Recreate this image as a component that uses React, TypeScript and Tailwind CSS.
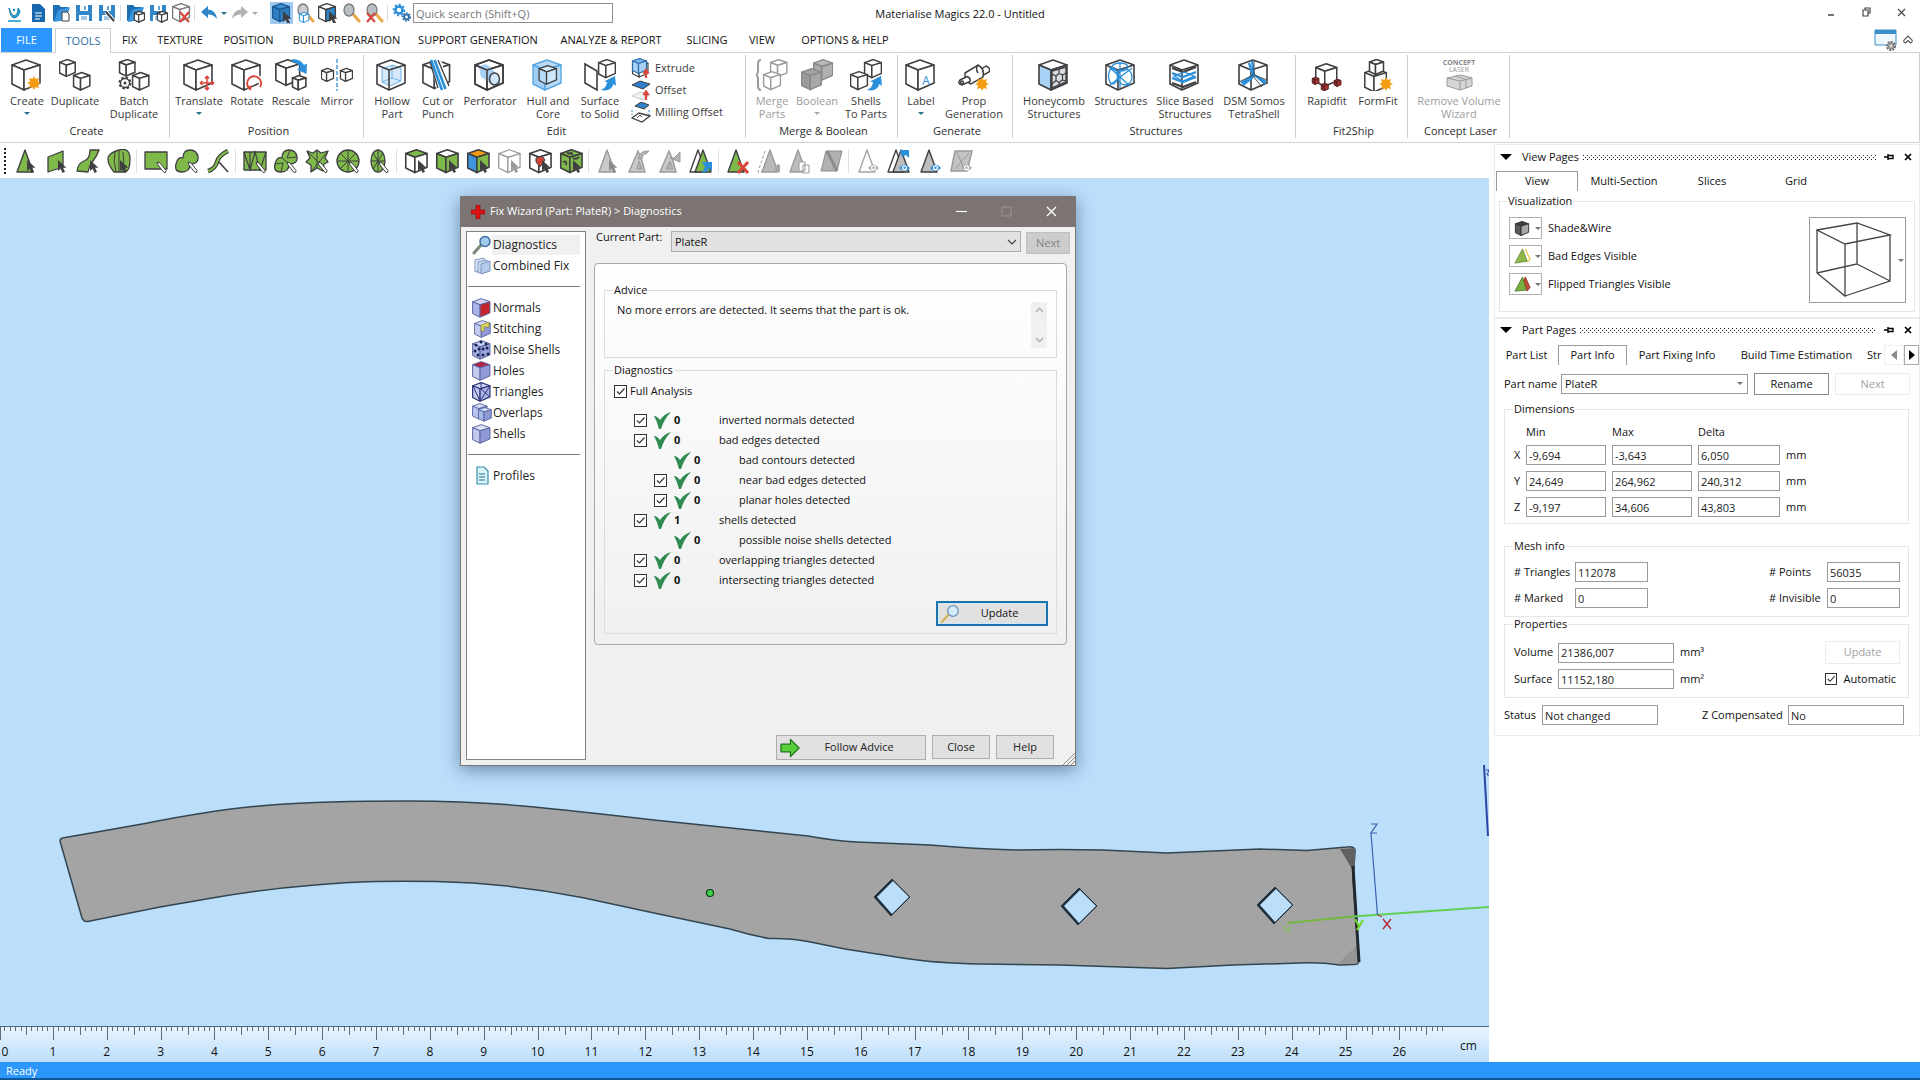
import React from "react";

const INK = "#3f3f41";
const BLUE = "#2b8fd9";
const GREEN = "#76b043";
const GREY = "#9a9a9a";

/* ---------- shared drawing pieces ---------- */

type CubeProps = { x?: number; y?: number; s?: number; top?: string; left?: string; right?: string; stroke?: string; w?: number };
function Cube({ x = 0, y = 0, s = 1, top = "#fff", left = "#fff", right = "#fff", stroke = INK, w = 1.6 }: CubeProps) {
  return (
    <g transform={`translate(${x} ${y}) scale(${s})`} stroke={stroke} strokeWidth={w / s} strokeLinejoin="round">
      <path d="M15 1 29 6 13 11 1 6Z" fill={top} />
      <path d="M1 6 13 11V31L1 25Z" fill={left} />
      <path d="M13 11 29 6V24L13 31Z" fill={right} />
    </g>
  );
}

function WireCube({ stroke = INK }: { stroke?: string }) {
  return (
    <g fill="none" stroke={stroke} strokeWidth="1.6" strokeLinejoin="round">
      <path d="M15 1 29 6V24L13 31 1 25V6Z" />
      <path d="M1 6 13 11 29 6M13 11V31" />
    </g>
  );
}

function Cursor({ x, y, fill = INK }: { x: number; y: number; fill?: string }) {
  return <path transform={`translate(${x} ${y})`} d="M0 0V11L2.6 8.8 4.6 13 7 11.8 5 7.8H8.4Z" fill={fill} />;
}

function Pencil({ x, y }: { x: number; y: number }) {
  return <path transform={`translate(${x} ${y})`} d="M0 0 3 1 9 8.5Q9.500 11 7 10.500L1 3Z" fill="#fff" stroke={INK} strokeWidth="1" />;
}

function Star({ x, y }: { x: number; y: number }) {
  return (
    <path
      transform={`translate(${x} ${y})`}
      d="M0-7 1.600-3.900 5-5 3.900-1.600 7 0 3.900 1.600 5 5 1.600 3.900 0 7-1.600 3.900-5 5-3.900 1.600-7 0-3.900-1.600-5-5-1.600-3.900Z"
      fill="#f39c12"
    />
  );
}

function BlueSwoop({ x, y }: { x: number; y: number }) {
  return <path transform={`translate(${x} ${y})`} d="M0 14Q6 11 6 6L3 5.500 14 0 15 10 12.500 8Q10 16 0 14Z" fill={BLUE} />;
}

function Eye({ x, y, c = BLUE }: { x: number; y: number; c?: string }) {
  return (
    <g transform={`translate(${x} ${y})`}>
      <path d="M0 4Q5.500-3 11 4Q5.500 10 0 4Z" fill={c} />
      <circle cx="5.500" cy="3.800" r="2.600" fill="#fff" />
      <circle cx="5.500" cy="3.800" r="1.300" fill={c} />
    </g>
  );
}

function Big({ children }: { children: React.ReactNode }) {
  return (
    <svg viewBox="0 0 32 32" className="h-8 w-8 shrink-0" aria-hidden="true">
      {children}
    </svg>
  );
}

/* ---------- ribbon ---------- */

const big: Record<string, React.ReactNode> = {
  create: (<Big><Cube /><Star x={23} y={24} /></Big>),
  duplicate: (<Big><Cube s={0.56} w={1.5} /><Cube x={14} y={13} s={0.58} w={1.5} /></Big>),
  batch: (
    <Big>
      <Cube s={0.55} x={1} w={1.5} /><Cube x={14} y={13} s={0.58} w={1.5} />
      <circle cx="7" cy="24" r="5.500" fill="#fff" stroke={INK} strokeWidth="2" strokeDasharray="2.400 1.900" />
      <circle cx="7" cy="24" r="4.500" fill="#fff" stroke={INK} strokeWidth="1.300" /><circle cx="7" cy="24" r="1.500" fill={INK} />
    </Big>
  ),
  translate: (
    <Big><Cube /><path d="M24 17V31M17 24H31M24 17l-2 2.500M24 17l2 2.500M24 31l-2-2.500M24 31l2-2.500M17 24l2.500-2M17 24l2.500 2M31 24l-2.500-2M31 24l-2.500 2" stroke="#d9463b" strokeWidth="1.500" fill="none" /></Big>
  ),
  rotate: (
    <Big><Cube /><path d="M29 28A6.500 6.500 0 1 0 18.500 28" stroke="#fff" strokeWidth="5" fill="none" /><path d="M29 28A7 7 0 1 0 18 29" stroke="#d9463b" strokeWidth="1.900" fill="none" /><path d="M15.500 27.500 21 26.500 19.500 32Z" fill="#d9463b" /></Big>
  ),
  rescale: (
    <Big><Cube s={0.85} /><path d="M17 0Q26 0 29 6L32 4.500 31.500 15 22 10.500 25.500 8.500Q22 3 17 3Z" fill={BLUE} /><Cube x={17} y={16} s={0.48} w={1.600} /></Big>
  ),
  mirror: (
    <Big><path d="M16 0V32" stroke={BLUE} strokeWidth="1.300" strokeDasharray="4 2" /><Cube y={9} s={0.43} w={1.300} /><Cube x={19} y={9} s={0.43} w={1.300} /></Big>
  ),
  hollow: (
    <Big><path d="M6 10 16 6 25 9V22L14 27 6 23Z" fill="#d6eafb" stroke="#6fb2e6" /><path d="M16 6V19L6 23M16 19 25 22" stroke="#6fb2e6" fill="none" /><WireCube /></Big>
  ),
  cut: (
    <Big><Cube s={0.95} /><path d="M8 0H19L27 32H15Z" fill="#fff" /><path d="M9 1 20 31M12.500 1 23.500 30" stroke={BLUE} strokeWidth="2.600" /><path d="M16 1 27 27" stroke={INK} strokeWidth="1.300" /><path d="M8 3 16 29" stroke={INK} strokeWidth="1.300" /></Big>
  ),
  perforator: (
    <Big><Cube /><path d="M5 9Q11 2 16 8L25 17Q25 25 18 25L7 18Z" fill="#a9d2f4" /><ellipse cx="20.500" cy="20" rx="5" ry="6" fill="#cfe6fa" stroke={INK} strokeWidth="1.500" /><WireCube /></Big>
  ),
  hull: (
    <Big><Cube top="#b7dbf8" left="#9fcef5" right="#b7dbf8" stroke="#58a6e2" w={1.400} /><Cube x={6.500} y={6} s={0.62} top="#d9edfc" left="#b7dbf8" right="#cce6fb" stroke={INK} w={1.300} /></Big>
  ),
  surface: (
    <Big><path d="M1 5 13 12V31L1 24Z" fill="#fff" stroke={INK} strokeWidth="1.600" /><Cube x={14} y={0} s={0.6} w={1.500} /><BlueSwoop x={17} y={17} /></Big>
  ),
  merge: (
    <Big><path d="M5 1Q2 1 2 5V12Q2 15 0 16Q2 17 2 20V27Q2 31 5 31" fill="none" stroke={GREY} strokeWidth="2" /><Cube x={14} y={0} s={0.58} stroke={GREY} w={1.400} /><Cube x={7} y={12} s={0.6} stroke={GREY} w={1.400} /></Big>
  ),
  boolean: (
    <Big><Cube x={12} y={0} s={0.68} top="#b9b9b9" left="#a9a9a9" right="#b1b1b1" stroke="#888" w={1.400} /><Cube y={9} s={0.7} top="#a2a2a2" left="#9a9a9a" right="#a8a8a8" stroke="#888" w={1.400} /></Big>
  ),
  shells: (<Big><Cube x={14} y={0} s={0.6} w={1.500} /><Cube y={12} s={0.6} w={1.500} /><BlueSwoop x={17} y={17} /></Big>),
  label: (
    <Big><Cube /><text x="21" y="26" fontSize="12" fontFamily="Open Sans, sans-serif" textAnchor="middle" fill={BLUE}>A</text></Big>
  ),
  prop: (
    <Big>
      <g stroke={INK} strokeWidth="1.500" fill="#fff"><path d="M22 11 28 7Q33 9 31 13L24 17Z" /><path d="M7 14 20 6Q27 10 25 18L13 25Q6 22 7 14Z" /><path d="M2 21 9 17.500Q13 19 12 22.500L4 26Q-1 25 2 21Z" /><path d="M20 6Q17 9 20 14" fill="none" /><circle cx="4" cy="23.500" r="1.400" /></g>
      <Star x={24} y={25} />
    </Big>
  ),
  honeycomb: (
    <Big><Cube top="#fff" left="#a7d2f5" right="#8fc4f0" /><path d="M14 12 28 8V23L14 29Z" fill="#d9dde0" stroke={INK} strokeWidth="1.400" /><path d="M18 17 21 14.500 24.500 16V21L21 23.500 18 21.500ZM21 10V14.500M14 15 18 17M24.500 16 28 14M24.500 21 28 22M21 23.500V26M18 21.500 14 25" fill="none" stroke={INK} strokeWidth="1.200" /></Big>
  ),
  structures: (
    <Big><WireCube /><g fill="none" stroke={BLUE} strokeWidth="1.300"><ellipse cx="8" cy="17" rx="4.500" ry="8" /><ellipse cx="20" cy="18" rx="7" ry="8" /><ellipse cx="15" cy="8" rx="8" ry="4" /><path d="M4 8 25 27M27 9 5 26M15 3V29" /></g></Big>
  ),
  slice: (
    <Big><WireCube />{[9, 14, 19, 24].map((y) => (<path key={y} d={`M3 ${y} 14 ${y + 4} 27 ${y - 1}`} fill="none" stroke={y === 14 || y === 19 ? BLUE : INK} strokeWidth="2.200" />))}<path d="M5 17 15 13 25 17 14 22Z" fill="none" stroke={BLUE} strokeWidth="1.300" /></Big>
  ),
  dsm: (
    <Big><WireCube /><path d="M14 2 16 16 28 23M16 16 3 24M11 4 15 17M18 17 27 25M15 18 5 26" fill="none" stroke={BLUE} strokeWidth="2.300" /><path d="M16 1V16L29 21M15 16 1 23M15 17 24 28" fill="none" stroke={INK} strokeWidth="0.900" /></Big>
  ),
  rapidfit: (
    <Big><Cube x={4} y={4} s={0.75} w={1.500} /><Cube x={1} y={18} s={0.24} top="#a33" left="#832a2a" right="#a33" stroke="#5a2020" w={1} /><Cube x={10} y={24} s={0.25} top="#a33" left="#832a2a" right="#a33" stroke="#5a2020" w={1} /><Cube x={23} y={20} s={0.24} top="#a33" left="#832a2a" right="#a33" stroke="#5a2020" w={1} /></Big>
  ),
  formfit: (<Big><Cube x={2} y={9} s={0.77} w={1.500} /><Cube x={7} y={0} s={0.5} w={1.500} /><Star x={24} y={25} /></Big>),
  concept: (
    <Big>
      <text x="16" y="6" textAnchor="middle" fontSize="7" fontWeight="700" fontFamily="Open Sans, sans-serif" fill="#888">CONCEPT</text>
      <text x="16" y="13" textAnchor="middle" fontSize="7" fontFamily="Open Sans, sans-serif" fill="#999">LASER</text>
      <path d="M4 19 18 16 29 19V27L17 31 4 27Z" fill="#d6d6d6" stroke="#999" /><path d="M4 19 17 22 29 19M17 22V31M12 17 23 20.500V29" fill="none" stroke="#999" />
    </Big>
  ),
};

type Item = { icon: string; lines: string[]; w: string; caret?: boolean; off?: boolean };
const groups: { name: string; w: string; pad: string; items: Item[]; extra?: boolean }[] = [
  { name: "Create", w: "w-[170px]", pad: "pl-[3px]", items: [
    { icon: "create", lines: ["Create"], w: "w-12", caret: true },
    { icon: "duplicate", lines: ["Duplicate"], w: "w-12" },
    { icon: "batch", lines: ["Batch", "Duplicate"], w: "w-[70px]" },
  ] },
  { name: "Position", w: "w-[194px]", pad: "pl-[2px]", items: [
    { icon: "translate", lines: ["Translate"], w: "w-[54px]", caret: true },
    { icon: "rotate", lines: ["Rotate"], w: "w-[42px]" },
    { icon: "rescale", lines: ["Rescale"], w: "w-[46px]" },
    { icon: "mirror", lines: ["Mirror"], w: "w-[46px]" },
  ] },
  { name: "Edit", w: "w-[382px]", pad: "pl-[5px]", extra: true, items: [
    { icon: "hollow", lines: ["Hollow", "Part"], w: "w-[46px]" },
    { icon: "cut", lines: ["Cut or", "Punch"], w: "w-[46px]" },
    { icon: "perforator", lines: ["Perforator"], w: "w-[58px]" },
    { icon: "hull", lines: ["Hull and", "Core"], w: "w-[58px]" },
    { icon: "surface", lines: ["Surface", "to Solid"], w: "w-[46px]" },
  ] },
  { name: "Merge & Boolean", w: "w-[152px]", pad: "pl-[4px]", items: [
    { icon: "merge", lines: ["Merge", "Parts"], w: "w-[44px]", off: true },
    { icon: "boolean", lines: ["Boolean"], w: "w-[46px]", caret: true, off: true },
    { icon: "shells", lines: ["Shells", "To Parts"], w: "w-[52px]" },
  ] },
  { name: "Generate", w: "w-[115px]", pad: "pl-[4px]", items: [
    { icon: "label", lines: ["Label"], w: "w-[38px]", caret: true },
    { icon: "prop", lines: ["Prop", "Generation"], w: "w-[68px]" },
  ] },
  { name: "Structures", w: "w-[283px]", pad: "pl-[4px]", items: [
    { icon: "honeycomb", lines: ["Honeycomb", "Structures"], w: "w-[74px]" },
    { icon: "structures", lines: ["Structures"], w: "w-[60px]" },
    { icon: "slice", lines: ["Slice Based", "Structures"], w: "w-[68px]" },
    { icon: "dsm", lines: ["DSM Somos", "TetraShell"], w: "w-[70px]" },
  ] },
  { name: "Fit2Ship", w: "w-[112px]", pad: "pl-[5px]", items: [
    { icon: "rapidfit", lines: ["Rapidfit"], w: "w-[52px]" },
    { icon: "formfit", lines: ["FormFit"], w: "w-[50px]" },
  ] },
  { name: "Concept Laser", w: "w-[102px]", pad: "pl-[2px]", items: [
    { icon: "concept", lines: ["Remove Volume", "Wizard"], w: "w-[98px]", off: true },
  ] },
];

const editExtras: { label: string; icon: React.ReactNode }[] = [
  { label: "Extrude", icon: (<><Cube x={1} y={2} s={0.55} w={1.200} /><Cube x={1} y={0} s={0.5} w={1.200} top="#7db9ec" left="#a7d2f5" right="#a7d2f5" stroke="#2a6ca8" /><path d="M15 20V13M12.500 15.500 15 12 17.500 15.500" fill="none" stroke="#d9463b" strokeWidth="2.200" /></>) },
  { label: "Offset", icon: (<><path d="M1 5 9 1 19 4 12 9Z" fill="#2f7fcb" stroke={INK} /><path d="M1 16 9 12 19 15 12 20Z" fill="#f1f1f1" stroke="#c9c9c9" /><path d="M15 20V12M12.500 15 15 11.500 17.500 15" fill="none" stroke="#d9463b" strokeWidth="2.200" /></>) },
  { label: "Milling Offset", icon: (<><path d="M4 4 10 0 18 3 13 7Z" fill="#2f7fcb" stroke={INK} /><path d="M1 8V14M18 8V13" stroke={BLUE} strokeDasharray="2 1.500" /><path d="M1 16 8 11 19 14 11 20Z" fill="#fff" stroke={INK} strokeWidth="1.300" /><path d="M6 16 9 13 11 15" fill="none" stroke={INK} /></>) },
];

function Caret({ off = false }: { off?: boolean }) {
  return <span className={off ? "mt-[5px] border-x-[3px] border-t-[3px] border-x-transparent border-t-[#aaa]" : "mt-[5px] border-x-[3px] border-t-[3px] border-x-transparent border-t-[#2c6f8f]"} />;
}

function Ribbon() {
  return (
    <div className="flex h-[91px] shrink-0 border-y border-r border-[#cfcfcf] bg-white pt-[2px] pb-1">
      {groups.map((g) => (
        <section key={g.name} className={`${g.w} flex shrink-0 flex-col justify-between border-r border-[#cfcfcf]`}>
          <div className={`${g.pad} flex justify-start`}>
            {g.items.map((it) => (
              <button key={it.icon} className={`${it.w} ${it.off ? "text-[#9c9c9c]" : "text-[#3a3a3a]"} flex shrink-0 flex-col items-center pt-1 text-[11px] leading-[13px] whitespace-nowrap`}>
                <span className="mb-[3px]">{big[it.icon]}</span>
                {it.lines.map((l) => (<span key={l}>{l}</span>))}
                {it.caret && <Caret off={it.off} />}
              </button>
            ))}
            {g.extra && (
              <div className="flex flex-col pt-[2px] pl-2">
                {editExtras.map((e) => (
                  <button key={e.label} className="flex h-[22px] items-center gap-1 text-[11px] whitespace-nowrap text-[#3a3a3a]">
                    <svg viewBox="0 0 20 21" className="h-[21px] w-5">{e.icon}</svg>
                    {e.label}
                  </button>
                ))}
              </div>
            )}
          </div>
          <h2 className="pl-1 text-center text-[11px] leading-[15px] text-[#2d2d2d]">{g.name}</h2>
        </section>
      ))}
    </div>
  );
}

/* ---------- title bar ---------- */

const folder = (<><path d="M2 2H8L10 4H17V8H8L5 18H2Z" fill="#1f6fb4" /><path d="M7 7 19 4 15 17 3 19Z" fill="#3a95dc" /></>);
const floppy = (<><path d="M2 2H18V18H2Z" fill="#2f86c9" /><path d="M6 2H14V8H6ZM5 12H15V18H5Z" fill="#fff" /><path d="M7 14H13M7 16H13" stroke="#2f86c9" strokeWidth="0.900" /><path d="M11 3V7" stroke="#2f86c9" strokeWidth="1.500" /></>);
const cubeSmall = (<Cube x={9} y={8} s={0.36} w={1.200} />);
const glass = (c: string) => (<><path d="M12 11 18 18" stroke="#eba94a" strokeWidth="3" strokeLinecap="round" /><ellipse cx="8" cy="7" rx="5" ry="6" fill={c} stroke="#7a7a7a" strokeWidth="1.300" /></>);

const qat: Record<string, React.ReactNode> = {
  logo: (<><path d="M4 5Q6 12 9 13Q13 12 13 5L15 8Q14 14 9 15Q5 14 4 5Z" fill="#1fa0c8" stroke="#1b7fae" /><path d="M3 18H16" stroke="#4ab0d8" strokeWidth="2" /><circle cx="9" cy="7" r="1.200" fill="#1d7fc0" /></>),
  doc: (<><path d="M4 1H12L17 6V19H4Z" fill="#1968ad" /><path d="M7 10H14M7 13H14M7 16H12" stroke="#fff" /></>),
  open: (<>{folder}<path d="M11 9H16L18 11V18H11Z" fill="#fff" stroke={INK} /></>),
  save: floppy,
  saveAs: (<>{floppy}<path d="M9 9 17 18" stroke="#fff" strokeWidth="4" /><path d="M9 9 17 18" stroke={INK} strokeWidth="2" /></>),
  importPart: (<>{folder}{cubeSmall}</>),
  savePart: (<>{floppy}{cubeSmall}</>),
  removePart: (<><Cube s={0.6} x={1} w={1.300} stroke="#777" /><path d="M9 9 18 19M18 9 9 19" stroke="#d9463b" strokeWidth="2.200" /></>),
  undo: (<path d="M2 9 9 3V6.500Q17 7 18 16Q14 11 9 11.500V15Z" fill="#2f86c9" />),
  redo: (<path d="M18 9 11 3V6.500Q3 7 2 16Q6 11 11 11.500V15Z" fill="#b2b2b2" />),
  pick: (<><Cube s={0.6} top="#3f8fd0" left="#2f7fc4" right="#2f7fc4" stroke="#1b568c" w={1.200} /><Cursor x={11} y={8} /></>),
  zoomPart: (<>{glass("#c9ccd0")}<Cube x={4} y={9} s={0.34} w={1} stroke={BLUE} /></>),
  selectFace: (<><Cube s={0.6} right="#2f86c9" w={1.300} /><Cursor x={11} y={8} /></>),
  zoom: glass("#b9c0c6"),
  zoomOff: (<>{glass("#b9c0c6")}<path d="M3 10 11 19M11 10 3 19" stroke="#d9463b" strokeWidth="2.200" /></>),
  gears: (<><circle cx="7" cy="7" r="3.500" fill="none" stroke={BLUE} strokeWidth="2.500" /><circle cx="7" cy="7" r="5.300" fill="none" stroke={BLUE} strokeWidth="2" strokeDasharray="2 2" /><circle cx="14.500" cy="14" r="2.400" fill="none" stroke="#2f6fa8" strokeWidth="2" /><circle cx="14.500" cy="14" r="4" fill="none" stroke="#2f6fa8" strokeWidth="1.400" strokeDasharray="1.500 1.500" /></>),
};

function Qat({ name, active = false }: { name: string; active?: boolean }) {
  return (
    <button aria-label={name} className={`${active ? "bg-[#9ccaf0]" : ""} flex h-[22px] w-[23px] items-center justify-center`}>
      <svg viewBox="0 0 20 20" className="h-5 w-5">{qat[name]}</svg>
    </button>
  );
}

function TitleBar() {
  const sep = <span className="mx-[2px] h-4 w-px bg-[#dcdcdc]" />;
  return (
    <header className="grid h-7 shrink-0 grid-cols-[1fr_auto_1fr] items-start bg-white">
      <div className="flex items-center pt-[2px] pl-[3px]">
        <Qat name="logo" /><Qat name="doc" /><Qat name="open" /><Qat name="save" /><Qat name="saveAs" />
        {sep}
        <Qat name="importPart" /><Qat name="savePart" /><Qat name="removePart" />
        {sep}
        <Qat name="undo" />
        <span className="mx-px border-x-[3px] border-t-[3px] border-x-transparent border-t-[#2c6f8f]" />
        <Qat name="redo" />
        <span className="mr-3 ml-px border-x-[3px] border-t-[3px] border-x-transparent border-t-[#aaa]" />
        <Qat name="pick" active /><Qat name="zoomPart" /><Qat name="selectFace" /><Qat name="zoom" /><Qat name="zoomOff" />
        {sep}
        <Qat name="gears" />
        <input aria-label="Quick search" placeholder="Quick search (Shift+Q)" className="h-5 w-[200px] border border-[#8f8f8f] px-[2px] text-[11px] text-[#555] placeholder:text-[#777]" />
      </div>
      <h1 className="pt-[6px] text-[11px] leading-4 text-[#111]">Materialise Magics 22.0 - Untitled</h1>
      <div className="flex justify-end gap-[21px] pt-[5px] pr-3">
        <button aria-label="Minimize"><svg viewBox="0 0 14 14" className="h-[14px] w-[14px]"><path d="M4 10H10" stroke="#444" strokeWidth="1.500" /></svg></button>
        <button aria-label="Restore"><svg viewBox="0 0 14 14" className="h-[14px] w-[14px]"><path d="M4 5H9V11H4ZM6 5V3H11V8H9" fill="none" stroke="#444" strokeWidth="1.200" /></svg></button>
        <button aria-label="Close"><svg viewBox="0 0 14 14" className="h-[14px] w-[14px]"><path d="M4 4 11 11M11 4 4 11" stroke="#444" strokeWidth="1.200" /></svg></button>
      </div>
    </header>
  );
}

const tabs: [string, string][] = [
  ["FIX", "w-[37px]"], ["TEXTURE", "w-[64px]"], ["POSITION", "w-[73px]"], ["BUILD PREPARATION", "w-[123px]"], ["SUPPORT GENERATION", "w-[140px]"],
  ["ANALYZE & REPORT", "w-[126px]"], ["SLICING", "w-[66px]"], ["VIEW", "w-[44px]"], ["OPTIONS & HELP", "w-[122px]"],
];

function TabBar() {
  return (
    <nav className="flex h-6 shrink-0 items-end bg-white pl-px text-[11px] whitespace-nowrap text-[#111]">
      <button className="h-6 w-[51px] bg-[#2b96ff] text-white">FILE</button>
      <button className="z-10 -mb-px ml-[3px] h-[25px] w-[56px] border border-b-0 border-[#cfcfcf] bg-white text-[#2a6f9f]">TOOLS</button>
      {tabs.map(([t, w]) => (<button key={t} className={`${w} h-6 shrink-0`}>{t}</button>))}
      <div className="flex h-6 flex-1 items-center justify-end gap-1 pr-[6px]">
        <svg viewBox="0 0 24 22" className="h-[22px] w-6"><path d="M1 1H22V16H1Z" fill="#eef7fd" stroke="#3c8fc9" /><path d="M1 1H22V5H1Z" fill="#3c8fc9" /><circle cx="17" cy="17" r="4" fill="#fff" stroke="#666" strokeWidth="2" strokeDasharray="2 1" /><circle cx="17" cy="17" r="2.500" fill="#ccc" stroke="#666" /></svg>
        <svg viewBox="0 0 12 10" className="h-[10px] w-3"><path d="M6 1 10 5Q11 7 8.500 8L6 5.500 3.500 8Q1 7 2 5Z" fill="#fff" stroke="#555" strokeWidth="1.100" /></svg>
      </div>
    </nav>
  );
}

/* ---------- selection tool bar ---------- */

const tri = (fill: string, stroke: string, x = 0) => (<path d={`M${x + 10} 1 ${x + 18} 23 ${x + 2} 23Z`} fill={fill} stroke={stroke} strokeWidth="1.400" strokeLinejoin="round" />);
const G = { fill: "#7fb94a", stroke: INK, strokeWidth: 1.300, strokeLinejoin: "round" as const };

const tools: React.ReactNode[][] = [
  [
    <>{tri(G.fill, INK, 1)}<Cursor x={13} y={11} /></>,
    <><path d="M3 8 18 2V18L3 23Z" {...G} /><Cursor x={13} y={11} /></>,
    <><path d="M14 1H23Q21 7 17 12T12 23L1 22Q2 14 8 12T14 1Z" {...G} /><Cursor x={14} y={11} /></>,
    <><path d="M7 23Q1 16 1 10T12 1 23 10 18 23Z" {...G} /><path d="M8 3Q6 12 9 23M16 3Q18 12 15 23M12 1V23" fill="none" stroke={INK} /><Cursor x={13} y={11} /></>,
  ],
  [
    <><path d="M1 3H23V20H1Z" {...G} /><Pencil x={13} y={13} /></>,
    <><path d="M8 9Q8 1 15 1T23 8 15 15Q15 23 7 23T1 15 8 9Z" {...G} /><Pencil x={13} y={13} /></>,
    <><path d="M2 22Q9 20 11 13T22 2" fill="none" stroke={INK} strokeWidth="4.500" /><path d="M2 22Q9 20 11 13T22 2" fill="none" stroke={G.fill} strokeWidth="2.200" /><path d="M13 13 22 23" stroke={INK} strokeWidth="1.600" /></>,
  ],
  [
    <><path d="M1 3H23V21H1Z" {...G} /><path d="M1 3 7 21 12 3 17 21 23 3M7 3V21" fill="none" stroke={INK} strokeWidth="1.200" /><Pencil x={13} y={13} /></>,
    <><path d="M8 9Q8 1 15 1T23 8 15 15Q15 23 7 23T1 15 8 9Z" {...G} /><path d="M8 9 15 15M16 1 13 9 23 8M1 15 9 14 7 23" fill="none" stroke={INK} /><Pencil x={13} y={13} /></>,
    <><path d="M2 2 8 4 12 1 16 4 23 2 20 9 23 13 19 15 18 22 12 19 6 23 6 16 1 13 5 9Z" {...G} /><path d="M2 2 22 22M23 2 6 23M12 1V19" fill="none" stroke={INK} /><Pencil x={13} y={13} /></>,
    <><circle cx="12" cy="12" r="11" {...G} /><path d="M12 1V23M1 12H23M4 4 20 20M20 4 4 20" stroke={INK} /><Pencil x={13} y={13} /></>,
    <><ellipse cx="11" cy="12" rx="7" ry="11" {...G} /><path d="M11 1V23M4 12H18M6 4 16 20M16 4 6 20" stroke={INK} /><Pencil x={12} y={13} /></>,
  ],
  [
    <><Cube x={1} s={0.76} top={G.fill} /><Cursor x={14} y={11} /></>,
    <><Cube x={1} s={0.76} left={G.fill} right={G.fill} /><Cursor x={14} y={11} /></>,
    <><Cube x={1} s={0.76} top="#f39c12" left="#3d97dd" right={G.fill} /><Cursor x={14} y={11} /></>,
    <><Cube x={1} s={0.76} stroke={GREY} w={1.300} /><Cursor x={14} y={11} fill={GREY} /></>,
    <><Cube x={1} s={0.76} /><path d="M8 9 14 7 17 11 12 18 8 13Z" fill="#cf4436" stroke={INK} /><Cursor x={14} y={11} /></>,
    <><Cube x={1} s={0.76} top={G.fill} left={G.fill} right={G.fill} /><path d="M8 4 13 5 12 3M4 13Q8 11 7 16M14 9Q17 11 20 8" fill="none" stroke={INK} strokeWidth="1.800" /><Cursor x={14} y={11} /></>,
  ],
  [
    <>{tri("#c9c9c9", "#9a9a9a", 1)}<Cursor x={13} y={11} fill="#8a8a8a" /></>,
    <><path d="M11 2 2 23H18L15 12Z" fill="#c9c9c9" stroke="#9a9a9a" strokeWidth="1.400" /><path d="M10 20H15L12 12ZM11 10Q13 1 22 2L19 5Q16 4 15 10Z" fill="#b3b3b3" stroke="#9a9a9a" /></>,
    <><path d="M11 2 2 23H18L15 12Z" fill="#c9c9c9" stroke="#9a9a9a" strokeWidth="1.400" /><path d="M8 20H15L12 12ZM12 9H16L22 3V13Z" fill="#b3b3b3" stroke="#9a9a9a" /></>,
    <>{tri("#fff", INK, -1)}{tri(G.fill, INK, 4)}<path d="M13 13H23V22L20 19Q18 24 13 24L16 18Z" fill={BLUE} /></>,
  ],
  [
    <>{tri(G.fill, INK)}<path d="M12 13 22 24M22 13 12 24" stroke="#d9463b" strokeWidth="3" /></>,
    <><path d="M8 2 1 23H8" fill="none" stroke="#999" strokeDasharray="3 2" />{tri("#b9b9b9", "#9a9a9a", 3)}<path d="M14 23Q20 21 20 15L23 16V23Z" fill="#a5a5a5" /></>,
    <>{tri("#bdbdbd", "#9a9a9a")}<path d="M11 13H17V22H11ZM15 16H21V24H15Z" fill="#fff" stroke="#999" /></>,
    <><path d="M7 2H23L18 22H2Z" fill="#b1b1b1" stroke="#8d8d8d" /><path d="M8 2 18 22" stroke="#8d8d8d" strokeWidth="3" /></>,
  ],
  [
    <>{tri("#fff", "#a5a5a5", 1)}<Eye x={12} y={15} c="#aaa" /></>,
    <>{tri("#fff", INK, -1)}{tri("#bdbdbd", INK, 4)}<path d="M13 1H22V9L19 6 15 8Z" fill={BLUE} /><Eye x={12} y={15} /></>,
    <>{tri("#bdbdbd", INK, 1)}<Eye x={12} y={15} /></>,
    <><path d="M6 2H23L18 22H2Z" fill="#c4c4c4" stroke="#999" strokeWidth="1.500" /><path d="M8 3 15 20M20 4 6 20" stroke="#999" /><Eye x={12} y={15} c="#aaa" /></>,
  ],
];

function SelectionBar() {
  return (
    <div className="flex h-[35px] shrink-0 items-center bg-white pt-px pl-[4px]" role="toolbar">
      <span className="h-[26px] border-l-2 border-dotted border-[#222] pl-[4px]" />
      {tools.map((g, i) => (
        <div key={i} className="flex items-center">
          {i > 0 && <span className="mx-[2px] h-6 w-[2px] border-l border-[#dedede]" />}
          {g.map((t, j) => (
            <button key={j} aria-label={`Selection tool ${i + 1}.${j + 1}`} className="flex w-[31px] justify-center">
              <svg viewBox="0 0 24 25" className="h-[25px] w-6">{t}</svg>
            </button>
          ))}
        </div>
      ))}
    </div>
  );
}

/* ---------- scene ---------- */

const hole = (x: number, y: number) => (
  <g key={x} strokeLinejoin="round">
    <path d={`M${x} ${y - 18} ${x + 18} ${y} ${x - 1} ${y + 19} ${x - 18} ${y}Z`} fill="#20303c" stroke="#20303c" />
    <path d={`M${x + 1} ${y - 16} ${x + 17} ${y} ${x} ${y + 17} ${x - 15} ${y}Z`} fill="#bbdefb" />
  </g>
);

function Scene() {
  return (
    <svg className="absolute inset-0 h-full w-full" aria-label="PlateR model">
      <g transform="translate(0 -178)">
        <path
          d="M60 841Q60 838 65 837.500L97 832 145 823.500Q218 809 271 805T407 801Q470 801 523 806T654 820L760 831 808 836Q835 841 857 842L930 845Q975 849 1016 850Q1060 849 1103 850L1167 853 1260 849 1307 850.500 1347 847Q1356 846 1355 852L1353 880 1359 958Q1360 965 1354 964.500L1340 965Q1320 962 1300 963L1233 965 1167 968.500 1060 965 980 964Q935 963 906 958.500L845 949Q825 945 808 941.500T769 938.500Q750 935 730 929L654 913 582 897.500Q509 883 436 881.500T315 885Q265 889 218 897L160 907 90 921Q84 923 82 918Z"
          fill="#a4a4a4" stroke="#33454f" strokeWidth="1.500" strokeLinejoin="round"
        />
        <path d="M1340 849 1355 848V868L1352 869Z" fill="#606060" />
        <path d="M1338 964 1358 944V963Z" fill="#959595" />
        <path d="M1353 866 1356 915 1359 962" fill="none" stroke="#20282e" strokeWidth="3" />
        {hole(892, 897)}{hole(1079, 906)}{hole(1275, 905)}
        <ellipse cx="710" cy="893" rx="3.500" ry="3.500" fill="#3fd04a" stroke="#0c3f12" strokeWidth="1.200" />
        <path d="M1287 923 1353 916.500" stroke="#74b840" strokeWidth="2" />
        <path d="M1353 916.500 1489 907" stroke="#62cf52" strokeWidth="2" />
        <path d="M1283 926 1288 932 1291 926" fill="none" stroke="#8abb5c" strokeWidth="1.500" />
        <path d="M1355 919 1359 926M1363 920 1357 930" stroke="#6fd62e" strokeWidth="2.200" />
        <path d="M1371 833 1377.500 915" stroke="#3a63b0" strokeWidth="1.200" />
        <path d="M1371 824H1377L1371 833H1377" fill="none" stroke="#3a63b0" strokeWidth="1.200" />
        <path d="M1383 919 1391 929M1391 919 1383 929" stroke="#b3242c" strokeWidth="1.300" />
        <path d="M1378 915 1382 917" stroke="#b3242c" />
        <path d="M1484 765 1488 836" stroke="#2746a8" strokeWidth="2" />
        <path d="M1486 770H1489L1487 775H1489" fill="none" stroke="#2746a8" />
      </g>
    </svg>
  );
}

const CM = 53.86;
function Ruler() {
  const ticks = Array.from({ length: 269 }, (_, i) => i);
  return (
    <svg className="h-9 w-full shrink-0 border-t border-[#4d6a7d] bg-gradient-to-b from-[#e9f4fd] to-[#bbdefb]" aria-label="Ruler in centimetres">
      {ticks.map((i) => {
        const x = Math.round((i * CM) / 10 - 1) + 0.5;
        const h = i % 10 === 0 ? 13 : i % 5 === 0 ? 8 : 4;
        return <path key={i} d={`M${Math.max(x, 0.5)} 0V${h}`} stroke="#56707f" strokeWidth="1" />;
      })}
      {Array.from({ length: 27 }, (_, i) => (
        <text key={i} x={i === 0 ? 5 : i * CM - 1} y="29" textAnchor="middle" fontSize="12" fontFamily="Open Sans, sans-serif" fill="#111">{i}</text>
      ))}
      <text x="1460" y="23" fontSize="12" fontFamily="Open Sans, sans-serif" fill="#111">cm</text>
    </svg>
  );
}

/* ---------- form parts ---------- */

function Check({ id, size = "h-[13px] w-[13px]" }: { id: string; size?: string }) {
  return (
    <span className={`${size} relative inline-grid shrink-0`}>
      <input id={id} type="checkbox" defaultChecked className="peer col-start-1 row-start-1 h-full w-full appearance-none border border-[#333] bg-white" />
      <svg viewBox="0 0 13 13" className="pointer-events-none invisible col-start-1 row-start-1 h-full w-full peer-checked:visible"><path d="M3 6.500 5.500 9 10.500 3.500" fill="none" stroke="#333" strokeWidth="1.200" /></svg>
    </span>
  );
}

function Field({ id, value, w, label }: { id: string; value: string; w: string; label?: string }) {
  return <input id={id} aria-label={label} defaultValue={value} className={`${w} h-5 shrink-0 border border-[#9a9a9a] bg-white px-[2px] text-[11px] text-[#222]`} />;
}

/* ---------- fix wizard ---------- */

const L = "#aab4e6";
const navIcons: Record<string, React.ReactNode> = {
  Diagnostics: (<><path d="M2 18 9 10" stroke="#7d8b78" strokeWidth="3" strokeLinecap="round" /><circle cx="13" cy="6.500" r="5" fill="#9ccbed" stroke="#3f6c9c" strokeWidth="1.500" /></>),
  "Combined Fix": (<><path d="M3 4 12 2V14L3 16Z" fill="#dfe9f7" stroke="#7d97c2" /><path d="M6 6 15 4V16L6 17Z" fill="#cbdaf1" stroke="#7d97c2" /><path d="M9 8 18 5V15L9 18Z" fill="#b5c9ec" stroke="#7d97c2" /></>),
  Normals: (<><Cube s={0.62} top="#d3d9f4" left={L} right="#c3262c" stroke="#5b64a0" w={1} /></>),
  Stitching: (<><Cube s={0.56} x={2} y={1} top="#d3d9f4" left="#c3caf0" right="#8f9ad6" stroke="#5b64a0" w={0.900} /><path d="M9 6 17 3V8L12 8V12H9Z" fill="#d8d560" stroke="#8d8a3d" strokeWidth="0.700" /></>),
  "Noise Shells": (<><Cube s={0.62} top="#c9d0f1" left={L} right="#98a3dc" stroke="#5b64a0" w={1} />{[[4, 5], [9, 2], [14, 4], [3, 11], [6, 15], [11, 9], [15, 8], [11, 15], [16, 14], [7, 9]].map(([x, y]) => <circle key={`${x}-${y}`} cx={x} cy={y} r="1.500" fill="#1c2452" />)}</>),
  Holes: (<Cube s={0.62} top="#b52340" left="#c3caf0" right="#8f9ad6" stroke="#5b64a0" w={1} />),
  Triangles: (<><Cube s={0.62} top="#d3d9f4" left="#c3caf0" right="#aab4e6" stroke="#2c3478" w={1.200} /><path d="M1 4 8 19 18 4M9 1V7L18 15" fill="none" stroke="#2c3478" /></>),
  Overlaps: (<><Cube s={0.52} top="#d3d9f4" left="#b9c4ee" right="#98a3dc" stroke="#5b64a0" w={0.900} /><Cube s={0.46} x={6} y={4} top="#c9def4" left="#a4bce8" right="#8f9ad6" stroke="#5b64a0" w={0.900} /></>),
  Shells: (<Cube s={0.62} top="#dfe4f8" left="#c3caf0" right="#8f9ad6" stroke="#5b64a0" w={1} />),
  Profiles: (<><path d="M5 1H12L16 5V18H5Z" fill="#d9f3fa" stroke="#3b8ea8" strokeWidth="1.200" /><path d="M7 8H13M7 11H13M7 14H13" stroke="#267089" strokeWidth="1.200" /></>),
};

const navGroups = [["Diagnostics", "Combined Fix"], ["Normals", "Stitching", "Noise Shells", "Holes", "Triangles", "Overlaps", "Shells"], ["Profiles"]];

const results: { n: number; t: string; sub?: boolean; box?: boolean }[] = [
  { n: 0, t: "inverted normals detected", box: true },
  { n: 0, t: "bad edges detected", box: true },
  { n: 0, t: "bad contours detected", sub: true },
  { n: 0, t: "near bad edges detected", sub: true, box: true },
  { n: 0, t: "planar holes detected", sub: true, box: true },
  { n: 1, t: "shells detected", box: true },
  { n: 0, t: "possible noise shells detected", sub: true },
  { n: 0, t: "overlapping triangles detected", box: true },
  { n: 0, t: "intersecting triangles detected", box: true },
];

const btn = "flex items-center justify-center border border-[#adadad] bg-[#e1e1e1] text-[11px] text-[#222]";

function FixWizard() {
  return (
    <div role="dialog" aria-label="Fix Wizard" className="absolute top-[18px] left-[460px] flex h-[570px] w-[616px] flex-col border border-[#7b7573] bg-[#f0f0f0] shadow-[0_4px_16px_rgba(40,70,100,0.55)]">
      <div className="flex h-[30px] shrink-0 items-center bg-[#7b7472] pb-px pl-[10px] text-[11px] text-white">
        <svg viewBox="0 0 14 14" className="mr-[5px] h-[14px] w-[14px]"><path d="M5 0H9V5H14V9H9V14H5V9H0V5H5Z" fill="#e01313" stroke="#8c0c0c" strokeWidth="0.700" /></svg>
        <span className="flex-1">Fix Wizard (Part: PlateR) &gt; Diagnostics</span>
        <div className="flex gap-[34px] pr-[18px]">
          <button aria-label="Minimize dialog"><svg viewBox="0 0 11 11" className="h-[11px] w-[11px]"><path d="M0 5.500H11" stroke="#fff" strokeWidth="1.200" /></svg></button>
          <button aria-label="Maximize dialog"><svg viewBox="0 0 11 11" className="h-[11px] w-[11px]"><path d="M1 1H10V10H1Z" fill="none" stroke="#9a9492" /></svg></button>
          <button aria-label="Close dialog"><svg viewBox="0 0 11 11" className="h-[11px] w-[11px]"><path d="M1 1 10 10M10 1 1 10" stroke="#fff" strokeWidth="1.300" /></svg></button>
        </div>
      </div>
      <div className="flex min-h-0 flex-1">
        <nav className="mt-1 mb-[5px] ml-[5px] flex w-[120px] shrink-0 flex-col border border-[#828282] bg-white pt-[2px] pr-[5px] pl-px text-xs text-[#222]">
          {navGroups.map((g, i) => (
            <div key={i}>
              {i > 0 && <hr className="my-[10px] border-[#7a7a7a]" />}
              {g.map((n) => (
                <button key={n} className="flex h-[21px] w-full items-center pl-1">
                  <svg viewBox="0 0 20 20" className="h-5 w-5 shrink-0">{navIcons[n]}</svg>
                  <span className={`${n === "Diagnostics" ? "bg-[#f0f0f0]" : ""} flex h-5 flex-1 items-center pl-px whitespace-nowrap`}>{n}</span>
                </button>
              ))}
            </div>
          ))}
        </nav>
        <div className="flex flex-1 flex-col pl-2 text-[11px] text-[#111]">
          <div className="flex items-start pt-1 pr-[5px]">
            <label htmlFor="current" className="w-[77px] shrink-0 pl-[2px] leading-3 whitespace-nowrap">Current Part:</label>
            <div className="relative flex-1">
              <select id="current" className="h-[21px] w-full appearance-none border border-[#adadad] bg-[#e1e1e1] pl-[3px] text-[11px] leading-[19px]"><option>PlateR</option></select>
              <svg viewBox="0 0 10 6" className="pointer-events-none absolute top-2 right-[4px] h-[6px] w-[10px]"><path d="M1 1 5 5 9 1" fill="none" stroke="#444" strokeWidth="1.200" /></svg>
            </div>
            <button disabled className="mt-px ml-[5px] h-[22px] w-[44px] border border-[#bfbfbf] bg-[#cccccc] text-[#848484]">Next</button>
          </div>
          <div className="mt-[9px] mr-2 flex flex-col rounded border border-[#a9a9a9] bg-gradient-to-b from-white to-[#f0f0f0] px-[9px] pt-[18px] pb-[10px]">
            <fieldset className="flex h-[76px] flex-col border border-[#dcdcdc]">
              <legend className="ml-2 px-px leading-4">Advice</legend>
              <div className="flex items-start justify-between pt-1 pr-[9px] pl-3">
                <p className="leading-4 text-[#111]">No more errors are detected. It seems that the part is ok.</p>
                <div className="flex h-[46px] w-4 flex-col items-center justify-between bg-[#f0f0f0] py-[5px]">
                  <svg viewBox="0 0 9 6" className="h-[6px] w-[9px]"><path d="M1 5 4.500 1.500 8 5" fill="none" stroke="#b5b5b5" strokeWidth="1.600" /></svg>
                  <svg viewBox="0 0 9 6" className="h-[6px] w-[9px]"><path d="M1 1 4.500 4.500 8 1" fill="none" stroke="#b5b5b5" strokeWidth="1.600" /></svg>
                </div>
              </div>
            </fieldset>
            <fieldset className="mt-1 flex flex-col border border-[#dcdcdc] pb-[7px]">
              <legend className="ml-2 px-px leading-4">Diagnostics</legend>
              <div className="flex items-center gap-[3px] pt-[5px] pl-[9px]">
                <Check id="full" /><label htmlFor="full" className="leading-4">Full Analysis</label>
              </div>
              <ul className="pt-[11px]">
                {results.map((r, i) => (
                  <li key={r.t} className={`${r.sub ? "pl-[49px]" : "pl-[29px]"} flex h-5 items-center`}>
                    <span className="flex w-5">{r.box && <Check id={`r${i}`} />}</span>
                    <svg viewBox="0 0 17 17" className="h-[17px] w-[17px]"><path d="M0 4Q3 4 6 8Q10 2 17 0Q10 7 7 17H5Q3 9 0 4Z" fill="#2f8a52" /></svg>
                    <b className="w-[48px] pl-[3px]">{r.n}</b>
                    <label htmlFor={r.box ? `r${i}` : undefined}>{r.t}</label>
                  </li>
                ))}
              </ul>
              <button className="mt-[11px] mr-[8px] flex h-[25px] w-[112px] items-center self-end border-2 border-[#1c72ad] bg-[#e1e1e1] pr-[7px] shadow-[inset_0_0_0_1px_#cfe6f7]">
                <svg viewBox="0 0 20 20" className="ml-[2px] h-5 w-5"><path d="M2 18 9 10" stroke="#d3b45f" strokeWidth="2.600" strokeLinecap="round" /><circle cx="13" cy="7" r="5.300" fill="#d3ebfb" stroke="#6b93b8" strokeWidth="1.300" /></svg>
                <span className="flex-1">Update</span>
              </button>
            </fieldset>
          </div>
          <div className="mt-auto mb-[5px] flex items-start justify-end gap-[6px] pr-[21px]">
            <button className={`${btn} h-[25px] w-[150px] pr-2`}>
              <svg viewBox="0 0 22 20" className="ml-[3px] h-5 w-[21px]"><path d="M1 6H11V1L20 10 11 19V14H1Z" fill="#55cf3a" stroke="#20731a" strokeWidth="1.300" strokeLinejoin="round" /></svg>
              <span className="flex-1">Follow Advice</span>
            </button>
            <button className={`${btn} h-6 w-[58px]`}>Close</button>
            <button className={`${btn} h-6 w-[58px]`}>Help</button>
          </div>
        </div>
      </div>
      <svg viewBox="0 0 12 12" className="absolute right-0 bottom-0 h-3 w-3"><path d="M0 12 12 0M4 12 12 4M8 12 12 8" stroke="#8e8e8e" /></svg>
    </div>
  );
}

/* ---------- right side panels ---------- */

function PanelTitle({ title }: { title: string }) {
  return (
    <div className="flex h-[22px] items-center pr-[7px] pl-[5px] text-xs">
      <span className="mr-[10px] border-x-[6px] border-t-[6px] border-x-transparent border-t-black" />
      <h2 className="mr-1 text-[11px] leading-4">{title}</h2>
      <svg className="h-[5px] flex-1" aria-hidden="true">
        <defs><pattern id={`d${title.charAt(0)}`} width="4" height="4" patternUnits="userSpaceOnUse"><path d="M0 0h1v1h-1zM2 2h1v1h-1z" fill="#222" /></pattern></defs>
        <rect width="100%" height="5" fill={`url(#d${title.charAt(0)})`} />
      </svg>
      <button aria-label={`Pin ${title}`} className="ml-2"><svg viewBox="0 0 10 8" className="h-2 w-[10px]"><path d="M0 4H4M4 1V7M4 2.500H9V5.500H4" fill="none" stroke="#000" strokeWidth="1.400" /></svg></button>
      <button aria-label={`Close ${title}`} className="ml-[10px]"><svg viewBox="0 0 8 8" className="h-2 w-2"><path d="M1 1 7 7M7 1 1 7" stroke="#000" strokeWidth="1.700" /></svg></button>
    </div>
  );
}

const visRows: [string, React.ReactNode][] = [
  ["Shade&Wire", <Cube key="c" x={1} y={1} s={0.5} top="#3d3d3d" left="#5a5a5a" right="#a9a9a9" stroke="#333" w={1} />],
  ["Bad Edges Visible", <g key="b"><path d="M12 1 17 12 14 15" fill="none" stroke="#e8c53a" strokeWidth="1.300" /><path d="M9 1 14 14 1 16Z" fill="#8fb84a" stroke="#5f7f2c" strokeWidth="0.800" /></g>],
  ["Flipped Triangles Visible", <g key="f"><path d="M12 1 17 12 14 16 8 8Z" fill="#c44a35" stroke="#7a2b20" strokeWidth="0.800" /><path d="M9 1 13 15 1 16Z" fill={GREEN} stroke="#4d6b25" strokeWidth="0.800" /></g>],
];

const fs = "border border-[#e6e6e6]";

function SidePanels() {
  return (
    <aside className="flex w-[431px] shrink-0 flex-col bg-white pt-[1px] text-[11px] text-[#111]">
      <div className="ml-[5px] border border-[#ececec]">
        <section className="border-b-2 border-[#ececec]">
          <div className="pt-px"><PanelTitle title="View Pages" /></div>
          <div className="flex items-end pt-[3px] pl-px text-center" role="tablist">
            <button role="tab" className="h-5 w-[82px] border border-b-0 border-[#9a9a9a]">View</button>
            <button role="tab" className="h-5 w-[92px]">Multi-Section</button>
            <button role="tab" className="h-5 w-[84px]">Slices</button>
            <button role="tab" className="h-5 w-[84px]">Grid</button>
          </div>
          <fieldset className={`${fs} mx-1 mt-[2px] mb-[5px] flex h-[119px] items-start justify-between`}>
            <legend className="ml-[7px] px-px leading-4">Visualization</legend>
            <div className="flex w-full items-start justify-between pt-2 pr-[8px] pl-[9px]">
              <div className="flex flex-col gap-[6px]">
                {visRows.map(([t, icon]) => (
                  <div key={t} className="flex items-center gap-[6px]">
                    <button aria-label={t} className="flex h-[22px] w-[33px] items-center border border-[#b0b0b0] pl-1">
                      <svg viewBox="0 0 18 18" className="h-[17px] w-[17px]">{icon}</svg>
                      <span className="ml-1 border-x-[3px] border-t-[3px] border-x-transparent border-t-[#777]" />
                    </button>
                    <span>{t}</span>
                  </div>
                ))}
              </div>
              <button aria-label="View orientation" className="flex h-[86px] w-[97px] items-center border border-[#9a9a9a] pl-[6px]">
                <svg viewBox="0 0 76 76" className="h-[76px] w-[76px]"><path d="M1 8 41 1 74 13 29 22ZM1 8V51L29 74V22M74 13V59L29 74M41 1V42L1 51M41 42 74 59" fill="none" stroke="#444" strokeWidth="1.300" /></svg>
                <span className="ml-[6px] border-x-[3px] border-t-[3px] border-x-transparent border-t-[#777]" />
              </button>
            </div>
          </fieldset>
        </section>
        <section className="pb-[10px]">
          <PanelTitle title="Part Pages" />
          <div className="mt-1 flex items-end whitespace-nowrap" role="tablist">
            <button role="tab" className="h-5 w-[63px] shrink-0">Part List</button>
            <button role="tab" className="h-5 w-[69px] shrink-0 border border-b-0 border-[#9a9a9a]">Part Info</button>
            <button role="tab" className="h-5 w-[100px] shrink-0">Part Fixing Info</button>
            <button role="tab" className="h-5 w-[138px] shrink-0 pl-px">Build Time Estimation</button>
            <button role="tab" className="h-5 w-[19px] shrink-0 pl-[2px] text-left">Str</button>
            <button aria-label="Previous tabs" className="flex h-5 flex-1 items-center justify-center border border-[#eee]"><span className="border-y-[5px] border-r-[6px] border-y-transparent border-r-[#8a8a8a]" /></button>
            <button aria-label="Next tabs" className="flex h-5 w-[15px] items-center justify-center border border-[#aaa]"><span className="border-y-[5px] border-l-[6px] border-y-transparent border-l-black" /></button>
          </div>
          <div className="flex items-center pt-2 pr-[9px] pl-2">
            <label htmlFor="part" className="w-[58px] pl-px whitespace-nowrap">Part name</label>
            <div className="relative flex-1">
              <select id="part" className="h-5 w-full appearance-none border border-[#9a9a9a] bg-white pl-[3px] text-[11px] leading-[18px]"><option>PlateR</option></select>
              <span className="pointer-events-none absolute top-2 right-[5px] border-x-[3px] border-t-[3px] border-x-transparent border-t-[#777]" />
            </div>
            <button className="ml-[6px] h-[22px] w-[75px] border border-[#8a8a8a]">Rename</button>
            <button disabled className="ml-[6px] h-[22px] w-[75px] border border-[#ececec] text-[#a0a0a0]">Next</button>
          </div>
          <div className="mr-[10px] ml-[9px]">
            <fieldset className={`${fs} mt-[6px] h-[123px]`}>
              <legend className="ml-2 px-px leading-4">Dimensions</legend>
              <div className="grid grid-cols-[6px_80px_80px_82px_auto] items-center gap-x-[6px] gap-y-[6px] pt-[7px] pl-[9px]">
                <span /><span className="leading-[15px]">Min</span><span className="leading-[15px]">Max</span><span className="leading-[15px]">Delta</span><span />
                {[["X", "-9,694", "-3,643", "6,050"], ["Y", "24,649", "264,962", "240,312"], ["Z", "-9,197", "34,606", "43,803"]].map((r) => (
                  <React.Fragment key={r[0]}>
                    <span>{r[0]}</span>
                    <Field id={`${r[0]}min`} label={`${r[0]} min`} value={r[1]} w="w-full" />
                    <Field id={`${r[0]}max`} label={`${r[0]} max`} value={r[2]} w="w-full" />
                    <Field id={`${r[0]}delta`} label={`${r[0]} delta`} value={r[3]} w="w-full" />
                    <span>mm</span>
                  </React.Fragment>
                ))}
              </div>
            </fieldset>
            <fieldset className={`${fs} mt-[14px] h-[79px]`}>
              <legend className="ml-2 px-px leading-4">Mesh info</legend>
              <div className="grid grid-cols-[61px_1fr_58px_73px] items-center gap-y-[6px] pt-2 pr-[8px] pl-[9px] whitespace-nowrap">
                <label htmlFor="tri"># Triangles</label><Field id="tri" value="112078" w="w-[73px]" />
                <label htmlFor="pts"># Points</label><Field id="pts" value="56035" w="w-full" />
                <label htmlFor="mrk"># Marked</label><Field id="mrk" value="0" w="w-[73px]" />
                <label htmlFor="inv"># Invisible</label><Field id="inv" value="0" w="w-full" />
              </div>
            </fieldset>
            <fieldset className={`${fs} mt-[-1px] h-[82px]`}>
              <legend className="ml-2 px-px leading-4">Properties</legend>
              <div className="mt-[9px] flex h-[23px] items-center pr-[8px] pl-[9px]">
                <label htmlFor="vol" className="w-[44px]">Volume</label><Field id="vol" value="21386,007" w="w-[116px]" /><span className="flex-1 pl-[6px]">mm³</span>
                <button disabled className="h-[23px] w-[75px] border border-[#ececec] text-[#a0a0a0]">Update</button>
              </div>
              <div className="mt-[5px] flex h-5 items-center pr-[12px] pl-[9px]">
                <label htmlFor="sur" className="w-[44px]">Surface</label><Field id="sur" value="11152,180" w="w-[116px]" /><span className="flex-1 pl-[6px]">mm²</span>
                <Check id="auto" size="h-3 w-3" /><label htmlFor="auto" className="pl-[6px]">Automatic</label>
              </div>
            </fieldset>
          </div>
          <div className="flex items-center pt-[7px] pr-[15px] pl-[9px]">
            <label htmlFor="status" className="w-[38px]">Status</label><Field id="status" value="Not changed" w="w-[116px]" />
            <span className="flex-1" />
            <label htmlFor="zc" className="w-[86px] whitespace-nowrap">Z Compensated</label><Field id="zc" value="No" w="w-[116px]" />
          </div>
        </section>
      </div>
    </aside>
  );
}

export default function App() {
  return (
    <div className="flex h-screen flex-col overflow-hidden bg-white font-['Open_Sans','Noto_Sans',sans-serif]">
      <TitleBar />
      <TabBar />
      <Ribbon />
      <main className="flex min-h-0 flex-1">
        <div className="flex min-w-0 flex-1 flex-col">
          <SelectionBar />
          <div className="relative flex-1 overflow-hidden bg-[#bbdefb]">
            <Scene />
            <FixWizard />
          </div>
          <Ruler />
        </div>
        <SidePanels />
      </main>
      <footer className="h-[18px] shrink-0 border-b-2 border-[#0d5796] bg-[#2b96fb] pl-[6px] text-[11px] leading-[18px] text-white">Ready</footer>
    </div>
  );
}
